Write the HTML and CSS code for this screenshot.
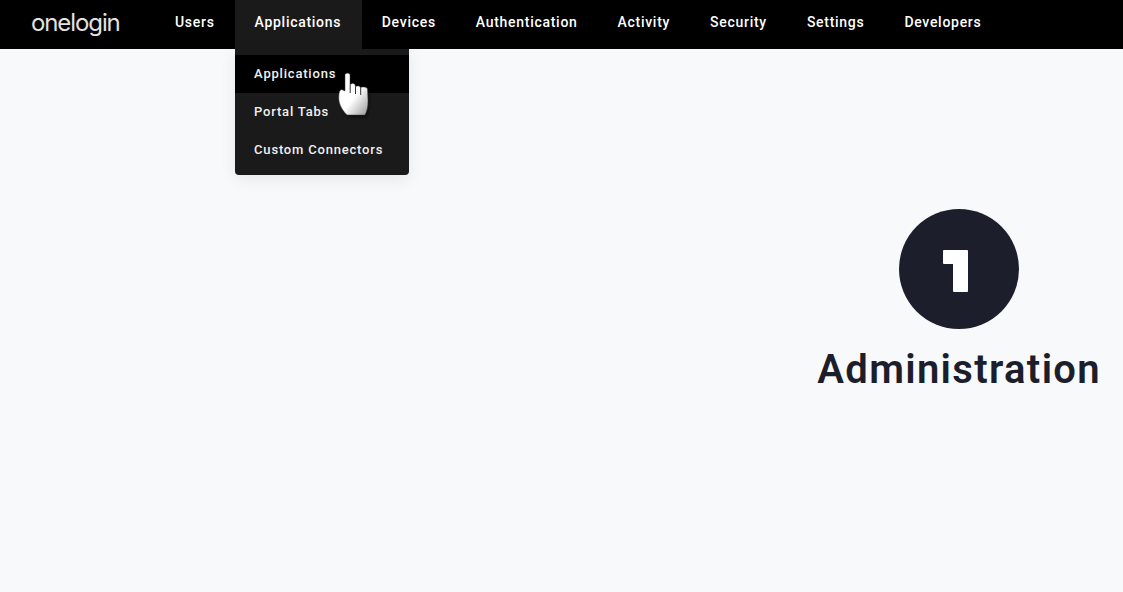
FILE: index.html
```html
<!DOCTYPE html>
<html lang="en">
<head>
<meta charset="utf-8">
<title>OneLogin Administration</title>
<link rel="stylesheet" href="styles.css">
</head>
<body>
<header class="topbar">
  <a class="logo">onelogin</a>
  <nav class="nav">
    <a class="nav-item">Users</a>
    <div class="nav-group">
      <a class="nav-item nav-item-open">Applications</a>
      <ul class="dropdown">
        <li class="dropdown-item dropdown-item-hover">Applications</li>
        <li class="dropdown-item">Portal Tabs</li>
        <li class="dropdown-item">Custom Connectors</li>
      </ul>
      <svg class="cursor" width="38" height="52" viewBox="0 0 38 52" aria-hidden="true">
        <defs>
          <linearGradient id="handfill" x1="0.25" y1="0.35" x2="0.85" y2="1">
            <stop offset="0.4" stop-color="#ffffff"/>
            <stop offset="1" stop-color="#a8a8a8"/>
          </linearGradient>
          <filter id="handshadow" x="-30%" y="-20%" width="160%" height="140%">
            <feGaussianBlur stdDeviation="1.5"/>
          </filter>
        </defs>
        <path class="cursor-shadow" filter="url(#handshadow)" transform="translate(1.500 2.500)" d="M8 4 C8 1.500 13 1.500 13 4 L13 14 C14 12 18 12 18 14 L18.500 16 C19 14.500 23 14.500 23 16 L23.500 17 C24 15.500 30 15.500 30.500 18 L31 30 C31 36 30 40 28 44 L10 44 C7 41 3 36 2 30 C1.500 24 2 19 4.500 18.500 L8 20 Z"/>
        <path fill="url(#handfill)" stroke="#3a3a3a" stroke-width="0.5" d="M8 4 C8 1.500 13 1.500 13 4 L13 14 C14 12 18 12 18 14 L18.500 16 C19 14.500 23 14.500 23 16 L23.500 17 C24 15.500 30 15.500 30.500 18 L31 30 C31 36 30 40 28 44 L10 44 C7 41 3 36 2 30 C1.500 24 2 19 4.500 18.500 L8 20 Z"/>
        <path class="cursor-gap" d="M13.200 14 V22 M18.500 16 V23 M23.700 17 V24"/>
      </svg>
    </div>
    <a class="nav-item">Devices</a>
    <a class="nav-item">Authentication</a>
    <a class="nav-item">Activity</a>
    <a class="nav-item">Security</a>
    <a class="nav-item">Settings</a>
    <a class="nav-item">Developers</a>
  </nav>
</header>
<main class="content">
  <section class="hero">
    <div class="badge">
      <svg width="32" height="46" viewBox="0 0 32 46" aria-hidden="true"><path d="M1 4H24A1 1 0 0 1 25 5V45A1 1 0 0 1 24 46H11A1 1 0 0 1 10 45V18H1A1 1 0 0 1 0 17V5A1 1 0 0 1 1 4Z" fill="#fff"/></svg>
    </div>
    <h1 class="hero-title">Administration</h1>
  </section>
</main>
</body>
</html>
```
FILE: styles.css
```css
* { box-sizing: border-box; }
html, body { height: 100%; }
body {
  margin: 0;
  background: #f8f9fb;
  font-family: Roboto, "Liberation Sans", sans-serif;
  overflow: hidden;
  display: flex;
  flex-direction: column;
}
.topbar {
  height: 49px;
  flex: none;
  background: #000;
  display: flex;
  align-items: stretch;
  padding-left: 31px;
}
.logo {
  width: 124px;
  align-self: center;
  color: #e2e2e2;
  font-family: Inter, sans-serif;
  font-size: 24px;
  font-weight: 400;
  line-height: 30px;
  letter-spacing: -1.1px;
  padding-bottom: 3px;
}
.nav { display: flex; align-items: stretch; }
.nav-group { position: relative; display: flex; }
.nav-item {
  display: flex;
  align-items: center;
  padding: 0 20px 6px;
  color: #fff;
  font-size: 14px;
  font-weight: 500;
  letter-spacing: 0.71px;
}
.nav-item-open { background: #1a1a1a; padding-right: 20.6px; }
.dropdown {
  position: absolute;
  top: 49px;
  left: 0;
  width: 174px;
  height: 126px;
  margin: 0;
  padding: 6px 0 0;
  list-style: none;
  background: #1a1a1a;
  border-radius: 0 0 4px 4px;
  box-shadow: 0 4px 16px rgba(0, 0, 0, 0.08);
}
.dropdown-item {
  height: 38px;
  display: flex;
  align-items: center;
  padding: 0 19.5px 2px;
  color: #f0f0f0;
  font-size: 13px;
  font-weight: 500;
  letter-spacing: 0.8px;
}
.dropdown-item-hover { background: #000; }
.cursor { position: absolute; top: 71px; left: 102px; }
.cursor-shadow { fill: rgba(0, 0, 0, 0.5); }
.cursor-gap { fill: none; stroke: #333; stroke-width: 1; }
.content {
  flex: 1;
  display: flex;
  justify-content: flex-end;
  padding: 160px 22px 0 0;
}
.hero {
  display: flex;
  flex-direction: column;
  align-items: center;
}
.badge {
  width: 120px;
  height: 120px;
  border-radius: 50%;
  background: #1c1f2b;
  display: flex;
  align-items: center;
  justify-content: center;
}
.hero-title {
  margin: 16px 0 0;
  color: #1c1f2b;
  font-size: 40px;
  line-height: 50px;
  font-weight: 600;
  letter-spacing: 1.33px;
}
```
